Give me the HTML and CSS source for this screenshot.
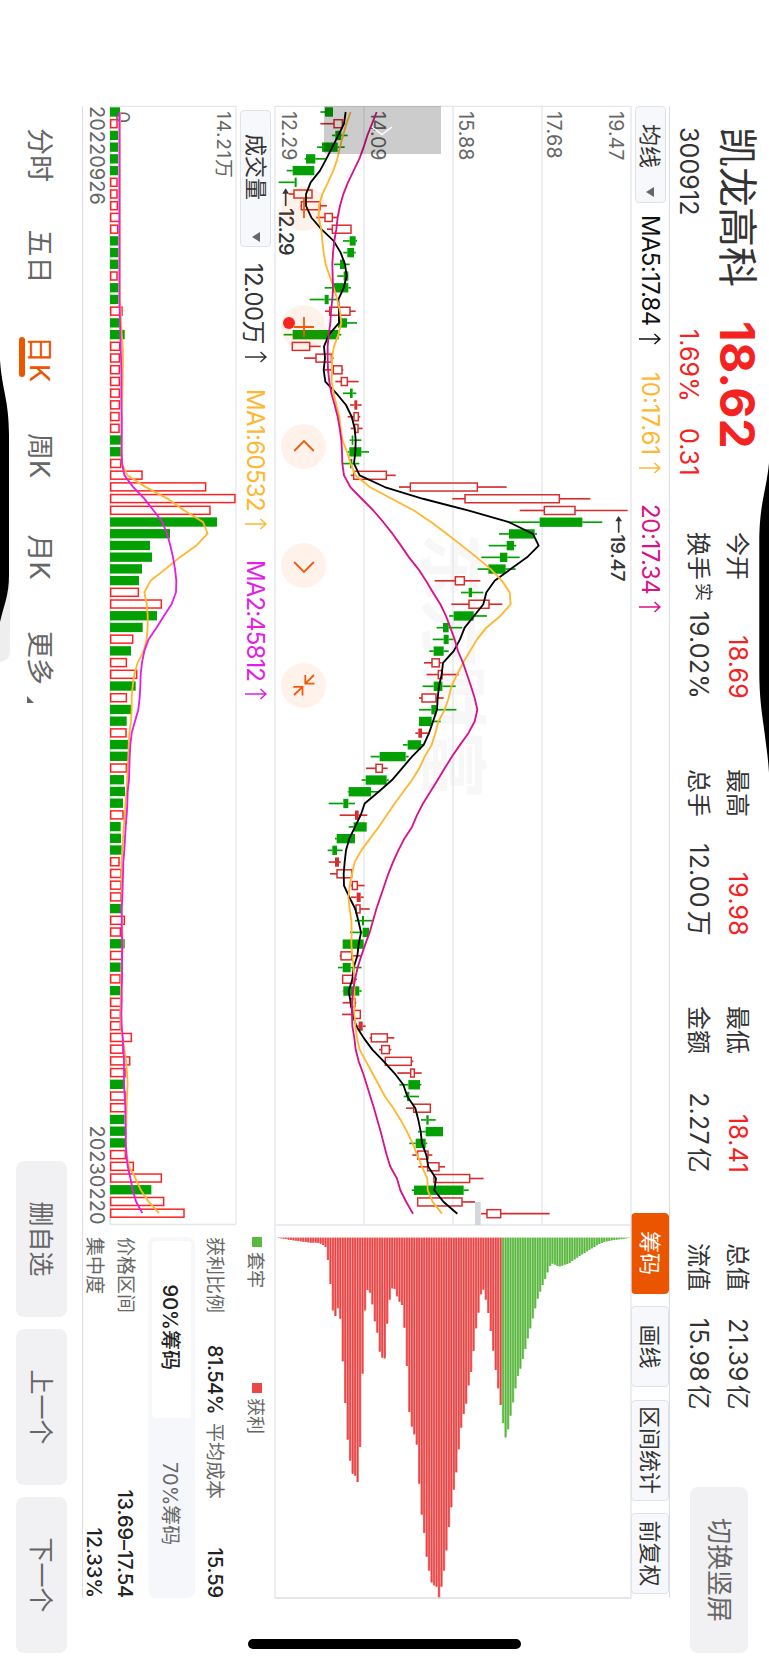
FILE: index.html
```html
<!DOCTYPE html>
<html lang="zh-CN">
	<head>
		<meta charset="UTF-8">
		<title>凯龙高科 300912</title>
		<link rel="stylesheet" href="styles.css">
	</head>
	<body>
		<div class="page">
		<div class="screen">
			<svg class="notch notch-top" viewBox="0 0 310 12"><path d="M0 0C30 3 40 9.700 80 9.700H208C240 9.700 255 6 285 2.500Q297 .8 310 0Z"/></svg>
			<svg class="notch notch-bottom" viewBox="0 0 310 12"><path d="M220 2H292Q300 2 302 12H220Z" fill="#eee"/><path d="M0 12C30 10 40 3 75 3H215C235 3 245 8 262 12Z"/></svg>
			<div class="home-bar"></div>

			<header class="header">
				<div class="stock">
					<div class="stock-top">
						<span class="name">凯龙高科</span>
						<span class="price">18.62</span>
					</div>
					<div class="stock-sub">
						<span class="code">300912</span>
						<span class="percent">1.69%</span>
						<span class="diff">0.31</span>
					</div>
				</div>
				<div class="metrics">
					<div class="metric"><span>今开</span><b class="red">18.69</b></div>
					<div class="metric"><span>最高</span><b class="red">19.98</b></div>
					<div class="metric"><span>最低</span><b class="red">18.41</b></div>
					<div class="metric"><span>总值</span><b>21.39<i>亿</i></b></div>
					<div class="metric"><span class="turnover">换手<sup>实</sup></span><b>19.02%</b></div>
					<div class="metric"><span>总手</span><b>12.00<i>万</i></b></div>
					<div class="metric"><span>金额</span><b>2.27<i>亿</i></b></div>
					<div class="metric"><span>流值</span><b>15.98<i>亿</i></b></div>
				</div>
				<div class="switch-btn">切换竖屏</div>
			</header>

			<div class="toolbar">
				<div class="select">均线<i class="caret"></i></div>
				<span class="ma ma5">MA5:17.84<svg class="up" viewBox="0 0 12 22"><path d="M6 22V1M1 6.5L6 1L11 6.5"/></svg></span>
				<span class="ma ma10">10:17.61<svg class="up" viewBox="0 0 12 22"><path d="M6 22V1M1 6.5L6 1L11 6.5"/></svg></span>
				<span class="ma ma20">20:17.34<svg class="up" viewBox="0 0 12 22"><path d="M6 22V1M1 6.5L6 1L11 6.5"/></svg></span>
				<div class="tools">
					<div class="tool active">筹码</div>
					<div class="tool">画线</div>
					<div class="tool wide">区间统计</div>
					<div class="tool">前复权</div>
				</div>
			</div>

			<div class="charts">
				<div class="kline">
					<svg id="kline" viewBox="0 0 3357 1068"></svg>
					<div class="drawer"><svg viewBox="0 0 12 22"><path d="M2 1L9.500 11L2 21"/></svg></div>
					<div class="controls">
						<div class="ctrl"><svg viewBox="0 0 22 22"><path d="M1 11H21"/></svg></div>
						<div class="ctrl"><svg viewBox="0 0 22 22"><path d="M1 11H21M11 1V21"/></svg><i class="dot"></i></div>
						<div class="ctrl"><svg viewBox="0 0 22 22"><path d="M15 1.200L5 11L15 20.800"/></svg></div>
						<div class="ctrl"><svg viewBox="0 0 22 22"><path d="M7 1.200L17 11L7 20.800"/></svg></div>
						<div class="ctrl"><svg viewBox="0 0 22 22"><path d="M1 9.700H9.700V.5M1 1L9.700 9.700M12.800 21.700V12.500H21.500M21 21L12.800 12.500"/></svg></div>
					</div>
				</div>
				<div class="chips"><svg id="chips" viewBox="0 0 1119 1068"></svg></div>
			</div>

			<div class="lower">
				<div class="volume">
					<div class="toolbar vol-toolbar">
						<div class="select vol-select">成交量<i class="caret"></i></div>
						<span class="ma vol-now">12.00万<svg class="up" viewBox="0 0 12 22"><path d="M6 22V1M1 6.5L6 1L11 6.5"/></svg></span>
						<span class="ma vol-ma1">MA1:60532<svg class="up" viewBox="0 0 12 22"><path d="M6 22V1M1 6.5L6 1L11 6.5"/></svg></span>
						<span class="ma vol-ma2">MA2:45812<svg class="up" viewBox="0 0 12 22"><path d="M6 22V1M1 6.5L6 1L11 6.5"/></svg></span>
					</div>
					<div class="vol-box"><svg id="volume" viewBox="0 0 3357 378"></svg></div>
					<div class="dates"><span>20220926</span><span>20230220</span></div>
				</div>
				<div class="panel">
					<div class="legend">
						<span><i class="sq sq-green"></i>套牢</span>
						<span><i class="sq sq-red"></i>获利</span>
					</div>
					<div class="row profit"><span>获利比例</span><b>81.54%</b><span>平均成本</span><b>15.59</b></div>
					<div class="segment"><div class="seg on">90%筹码</div><div class="seg">70%筹码</div></div>
					<div class="row"><span>价格区间</span><b>13.69–17.54</b></div>
					<div class="row"><span>集中度</span><b>12.33%</b></div>
				</div>
			</div>

			<footer class="footer">
				<nav class="tabs">
					<span>分时</span>
					<span>五日</span>
					<span class="current">日K</span>
					<span>周K</span>
					<span>月K</span>
					<span class="more">更多</span>
				</nav>
				<div class="btn">删自选</div>
				<div class="btn">上一个</div>
				<div class="btn">下一个</div>
			</footer>
		</div>
		</div>
		<script src="chart.js"></script>
	</body>
</html>
```
FILE: styles.css
```css
*{
	box-sizing: border-box;
}
body{
	margin: 0;
	background: #fff;
	font-family: Inter, "Noto Sans CJK SC", sans-serif;
	color: #333;
}
.page{
	width: 769px;
	height: 1665px;
	overflow: hidden;
}
/* 横屏 */
.screen{
	width: 1665px;
	height: 769px;
	position: relative;
	transform-origin: 0 0;
	transform: translateX(769px) rotate(90deg);
	white-space: nowrap;
}
b{
	font-weight: 400;
}
i{
	font-style: normal;
}
.red{
	color: #f52222;
}
.notch{
	position: absolute;
	width: 310px;
	height: 12px;
}
.notch-top{
	left: 463px;
	top: 0;
}
.notch-bottom{
	left: 360px;
	bottom: 0;
}
.home-bar{
	position: absolute;
	left: 1639px;
	top: 248px;
	width: 10px;
	height: 273px;
	border-radius: 5px;
	background: #000;
}

/* 顶部行情 */
.header{
	display: flex;
	height: 98.6px;
	padding-left: 127px;
}
.stock{
	width: 405px;
}
.stock-top{
	display: flex;
	align-items: center;
	height: 63px;
}
.name{
	width: 194px;
	font-size: 40px;
	line-height: 62px;
}
.price{
	font-size: 48px;
	font-weight: 700;
	color: #f52222;
	letter-spacing: 0.2px;
}
.stock-sub{
	display: flex;
	height: 34px;
	line-height: 34px;
	font-size: 25px;
	letter-spacing: 0.1px;
}
.code{
	width: 202px;
}
.percent{
	width: 99px;
	color: #f52222;
}
.diff{
	color: #f52222;
}
.metrics{
	display: grid;
	grid-template-columns: repeat(4, 167px);
	grid-auto-rows: 39px;
	column-gap: 70px;
	padding-top: 12px;
	font-size: 24px;
	line-height: 39px;
}
.metric{
	display: flex;
	justify-content: space-between;
}
.metric b{
	font-size: 25px;
	letter-spacing: 0.2px;
}
.metric b i{
	margin-left: 3px;
}
.turnover sup{
	font-size: 18px;
	line-height: 1;
	margin-left: 3px;
	vertical-align: 7px;
}
.switch-btn{
	width: 166px;
	height: 58px;
	margin: 21px 0 0 77px;
	border-radius: 8px;
	background: #f1f1f4;
	color: #666;
	font-size: 26px;
	line-height: 58px;
	text-align: center;
}

/* 均线工具栏 */
.toolbar{
	display: flex;
	align-items: center;
	width: 1492px;
	height: 39px;
	margin-left: 106px;
	border-top: 1px solid #dcdee3;
}
.select{
	display: flex;
	align-items: center;
	justify-content: space-between;
	width: 97px;
	height: 31px;
	padding: 0 5px 0 17px;
	border: 1px solid #dfe2e7;
	border-radius: 4px;
	background: #f7f8fb;
	font-size: 22px;
	line-height: 28px;
}
.caret{
	border: 5px solid transparent;
	border-top: 8px solid #666;
	border-bottom: 0;
}
.ma{
	display: flex;
	align-items: center;
	font-size: 24px;
	letter-spacing: -0.7px;
}
.up{
	width: 12px;
	height: 22px;
	margin-left: 7px;
	fill: none;
	stroke: currentColor;
	stroke-width: 1.5;
}
.ma5{
	width: 157px;
	margin-left: 12px;
	color: #111;
}
.ma10{
	width: 132px;
	color: #ffb72f;
	letter-spacing: 0;
}
.ma20{
	color: #d8128a;
	letter-spacing: -0.4px;
}
.tools{
	display: flex;
	gap: 12.5px;
	margin-left: auto;
	padding-right: 4px;
}
.tool{
	width: 81px;
	height: 38px;
	border: 1px solid #dfe2e7;
	border-radius: 4px;
	background: #f7f8fb;
	font-size: 22px;
	line-height: 37px;
	text-align: center;
}
.tool.wide{
	width: 101px;
}
.tool.active{
	background: #eb5500;
	border-color: #eb5500;
	color: #fff;
}

/* K线 + 筹码 */
.charts{
	display: flex;
	height: 356px;
	margin-left: 105.5px;
}
.kline{
	position: relative;
	width: 1119px;
}
.chips{
	width: 373px;
}
#kline, #chips, #volume{
	display: block;
	width: 100%;
	height: 100%;
	overflow: visible;
}
.drawer{
	position: absolute;
	left: 0;
	top: 190px;
	width: 48.5px;
	height: 117px;
	border-radius: 0 0 2px 0;
	background: rgba(0,0,0,0.2);
}
.drawer svg{
	display: block;
	width: 12px;
	height: 22px;
	margin: 48px 0 0 19px;
	fill: none;
	stroke: #fff;
	stroke-width: 1.5;
}
.controls{
	position: absolute;
	left: 80px;
	top: 305px;
	display: flex;
	gap: 74.3px;
}
.ctrl{
	position: relative;
	width: 45px;
	height: 45px;
	padding: 11.5px;
	border-radius: 50%;
	background: rgba(236,85,0,0.08);
}
.ctrl svg{
	display: block;
	width: 22px;
	height: 22px;
	fill: none;
	stroke: #f2590c;
	stroke-width: 1.8;
}
.dot{
	position: absolute;
	left: 12px;
	top: 31px;
	width: 12px;
	height: 12px;
	border-radius: 50%;
	background: #f5261f;
}

/* 成交量 */
.lower{
	display: flex;
	width: 1492px;
	height: 193px;
	margin-left: 106px;
	border-bottom: 1px solid #dcdee3;
}
.volume{
	width: 1118.5px;
}
.vol-toolbar{
	width: auto;
	height: 39px;
	margin-left: 0;
	border-top: 0;
}
.vol-select{
	width: 137px;
	margin-left: 4px;
	padding: 0 4px 0 23px;
}
.vol-now{
	width: 126px;
	margin-left: 16px;
}
.vol-ma1{
	width: 171px;
	color: #ffb72f;
}
.vol-ma2{
	color: #e31fe3;
	letter-spacing: -0.9px;
}
.vol-box{
	height: 126px;
}
.dates{
	display: flex;
	justify-content: space-between;
	font-size: 20px;
	line-height: 26px;
	color: #666;
}

/* 筹码统计 */
.panel{
	width: 361px;
	margin-left: 12.5px;
	font-size: 19px;
	color: #666;
}
.legend{
	display: flex;
	height: 40px;
	line-height: 45px;
	font-size: 18px;
}
.legend span{
	display: flex;
	align-items: center;
	width: 146px;
}
.sq{
	width: 10px;
	height: 10px;
	margin: 0 5px 3px 0;
}
.sq-green{
	background: #5bb840;
}
.sq-red{
	background: #ec4646;
}
.row{
	display: flex;
	justify-content: space-between;
	height: 31px;
	line-height: 32px;
}
.row b{
	font-size: 20px;
	font-weight: 500;
	color: #222;
	letter-spacing: -0.1px;
}
.profit{
	height: 40px;
	line-height: 41px;
}
.profit span{
	width: 108px;
}
.profit b:nth-child(2){
	width: 78px;
	letter-spacing: -0.5px;
}
.profit b:nth-child(4){
	flex: 1;
	text-align: right;
}
.segment{
	display: flex;
	height: 47px;
	margin-bottom: 7px;
	padding: 4px;
	border-radius: 8px;
	background: #f6f7fa;
}
.seg{
	flex: 1;
	border-radius: 4px;
	font-size: 20px;
	line-height: 42px;
	text-align: center;
}
.seg.on{
	padding-right: 4px;
	background: #fff;
	font-weight: 500;
	color: #222;
}
.seg:last-child{
	padding-right: 4px;
}

/* 底部 */
.footer{
	display: flex;
	align-items: center;
	gap: 12px;
	height: 81px;
	padding-left: 128px;
}
.tabs{
	display: flex;
	width: 1021px;
	padding-top: 6px;
	font-size: 27px;
	color: #666;
}
.tabs span{
	position: relative;
	width: 101.5px;
	line-height: 56px;
}
.tabs .current{
	width: 97px;
	margin-left: 5px;
	color: #eb5500;
	letter-spacing: 1px;
}
.current::after{
	content: "";
	position: absolute;
	left: 1px;
	bottom: 8px;
	width: 40px;
	height: 6px;
	border-radius: 3px;
	background: #eb5500;
}
.tabs .more{
	width: 74px;
	margin-left: -5px;
}
.more::after{
	content: "";
	position: absolute;
	right: 2px;
	bottom: 16px;
	border-left: 7px solid transparent;
	border-bottom: 7px solid #666;
}
.btn{
	width: 156px;
	height: 51px;
	border-radius: 8px;
	background: #f1f1f4;
	color: #666;
	font-size: 25px;
	line-height: 52px;
	text-align: center;
}
```
FILE: chart.js
```js
var STEP = 35.16;
var FIRST = 18;
var GREEN = '#02a002';

// [low, bodyLow, bodyHigh, high, type]  r:空心 f:红实心 g:绿
var candles = [
	[152,166,190,190,'g'],[152,193,218,218,'r'],[187,197,215,234,'g'],[142,157,204,225,'g'],[105,109,137,170,'g'],
	[51,69,134,134,'g'],[27,75,81,81,'g'],[57,73,127,127,'r'],[93,95,151,172,'r'],[140,166,188,205,'r'],
	[172,188,244,244,'r'],[220,240,258,262,'g'],[221,233,253,258,'g'],[193,211,225,240,'g'],[203,222,236,236,'g'],
	[165,190,236,244,'g'],[120,165,177,205,'g'],[166,180,241,258,'r'],[205,205,232,262,'g'],[42,69,207,215,'g'],
	[67,68,120,153,'r'],[103,139,185,192,'r'],[160,191,217,221,'r'],[197,215,233,267,'r'],[220,241,249,260,'g'],
	[241,254,263,276,'f'],[234,253,266,272,'r'],[243,255,265,279,'r'],[240,246,251,275,'g'],[234,239,275,298,'g'],
	[218,241,248,269,'g'],[243,252,350,378,'r'],[388,422,623,711,'r'],[548,586,869,962,'r'],[750,824,916,1074,'r'],
	[715,810,938,998,'g'],[688,718,795,802,'g'],[657,711,733,740,'g'],[635,691,713,750,'g'],[624,656,708,738,'g'],
	[495,557,584,632,'r'],[574,597,607,641,'g'],[545,598,658,698,'r'],[538,552,612,652,'g'],[501,520,537,578,'g'],
	[489,522,537,552,'g'],[479,492,522,537,'g'],[463,487,509,516,'r'],[471,506,517,567,'r'],[459,492,518,558,'g'],
	[448,457,499,522,'r'],[448,485,500,560,'g'],[448,448,486,513,'g'],[437,446,457,480,'f'],[400,414,454,460,'g'],
	[303,330,408,417,'g'],[289,319,338,354,'r'],[276,288,351,357,'g'],[234,237,304,328,'g'],[177,221,236,256,'g'],
	[210,256,267,293,'f'],[237,252,291,291,'g'],[196,201,256,256,'g'],[174,188,202,219,'g'],[177,196,208,213,'f'],
	[181,202,246,246,'r'],[244,248,263,285,'r'],[244,261,273,282,'f'],[253,259,271,300,'r'],[256,277,283,311,'g'],
	[241,279,298,298,'g'],[219,219,282,282,'g'],[210,214,246,276,'r'],[205,219,243,276,'g'],[217,219,250,262,'r'],
	[219,221,269,276,'g'],[219,243,256,260,'r'],[217,253,272,272,'r'],[262,267,279,288,'f'],[300,305,353,374,'r'],
	[328,336,359,365,'r'],[343,347,425,431,'r'],[383,423,434,456,'r'],[389,416,451,455,'g'],[402,412,419,448,'g'],
	[409,432,482,482,'r'],[454,470,477,498,'g'],[445,468,520,520,'g'],[419,438,468,473,'g'],[428,444,475,488,'r'],
	[446,474,508,526,'r'],[490,493,600,642,'r'],[426,433,582,597,'g'],[444,444,577,616,'r'],[634,652,693,840,'r']
];
var ma5 = [228,223,206,188,170,151,123,109,109,125,155,192,213,226,231,222,206,208,208,178,163,166,162,167,200,229,246,255,258,257,253,270,345,460,595,718,790,807,772,723,675,650,641,613,585,571,552,520,516,508,504,502,490,478,462,427,397,367,327,285,273,256,239,229,225,222,223,239,257,266,274,267,263,252,248,237,243,249,260,282,308,342,374,401,413,437,446,453,457,470,476,499,494,522,563];
var ma10 = [243,230,220,211,203,191,175,158,148,147,155,158,162,168,180,192,203,211,215,206,193,187,187,186,192,200,209,213,218,232,243,257,300,366,433,485,532,577,621,663,697,720,723,692,650,622,601,580,562,545,537,525,506,497,486,465,449,427,401,375,351,327,301,275,255,247,240,236,240,245,246,245,248,252,254,254,254,254,257,262,270,289,308,327,346,371,393,412,429,443,457,473,474,489,517];
var ma20 = [321,307,293,282,269,252,235,221,211,204,200,194,190,188,189,190,188,184,182,177,174,174,175,179,185,195,204,210,215,217,218,223,242,276,311,341,369,394,418,446,469,490,512,529,542,555,565,580,592,604,615,623,615,596,571,547,525,504,482,460,442,427,404,386,370,356,344,332,320,310,300,287,275,264,256,250,247,247,248,254,258,267,280,291,302,313,323,333,342,351,362,382,392,410,430];

var volumes = [30,23,24,24,24,24,23,23,24,32,25,25,25,25,23,25,25,38,29,44,31,30,30,30,30,30,29,29,34,34,34,98,289,377,302,321,180,120,126,96,87,87,156,141,98,70,63,51,82,77,51,64,50,50,55,55,51,42,45,39,41,32,33,35,29,35,35,35,34,45,33,44,38,32,32,30,34,33,33,66,41,61,47,43,47,49,43,48,47,48,72,156,124,163,224];
var volTypes = 'grggggrrrrrgggrggrggrrrrrrrrggrrrrrgggggg' + 'rrggrgrrgrggrggrgggrgggrrrrgrrgrgrgrrrrrrrgrrgggrrrgrr';
var volMa1 = [30,30,30,30,30,30,30,30,30,30,30,30,30,30,30,30,30,32,33,35,38,39,38,38,37,36,35,35,35,34,35,52,106,172,222,279,293,259,210,167,122,103,110,113,113,110,101,83,73,68,65,65,63,58,56,55,53,51,50,46,45,41,39,37,35,34,35,35,35,36,37,38,37,35,34,33,32,31,32,38,43,48,51,53,51,50,49,48,48,50,57,76,92,115,147];
var volMa2 = [28,28,28,28,28,28,28,28,28,28,28,28,28,28,28,28,28,29,30,31,32,33,34,34,34,34,35,35,35,35,36,43,69,103,130,157,171,181,189,195,199,198,185,162,140,116,103,96,92,91,89,85,75,65,61,59,58,57,53,52,50,47,45,43,40,39,38,37,35,35,35,37,36,36,36,35,35,34,35,38,40,42,42,42,44,46,46,47,47,49,53,61,68,78,97];

var chips = [1,2,3,4,6,7,8,9,10,11,12,13,14,15,15,15,16,18,22,28,67,139,218,235,212,243,371,496,606,669,708,714,733,628,408,218,157,165,200,251,285,342,360,362,258,186,152,154,176,192,202,270,385,523,567,590,621,738,831,886,957,999,1034,1043,1047,1082,1047,999,938,868,809,756,704,635,570,529,498,443,403,340,272,225,170,156,186,226,280,339,397,452,502,556,599,575,534,494,452,415,393,364,334,302,272,242,212,183,162,142,124,104,85,78,81,85,86,84,81,79,76,70,65,60,55,50,46,41,36,32,28,23,19,16,13,11,10,8,7,6,5,4,3,2,1];

function rect(x, y, w, h, fill, stroke){
	return '<rect x="' + x + '" y="' + y + '" width="' + w + '" height="' + h + '" fill="' + fill + '"' +
		(stroke ? ' stroke="' + stroke + '" stroke-width="4.5"' : '') + '/>';
}
function line(x1, y1, x2, y2, color, w){
	return '<path d="M' + x1 + ' ' + y1 + 'L' + x2 + ' ' + y2 + '" fill="none" stroke="' + color + '" stroke-width="' + w + '"/>';
}
function text(x, y, str, len, size, color, weight){
	return '<text x="' + x + '" y="' + y + '" font-size="' + size + '" fill="' + color + '" font-weight="' + (weight || 400) +
		'" textLength="' + len + '">' + str + '</text>';
}
function curve(data, base, color){
	var pts = '';
	for(var i = 0;i<data.length;i++){
		pts += (FIRST + i * STEP) + ',' + (base - data[i]) + ' ';
	}
	return '<polyline points="' + pts + '" fill="none" stroke="' + color + '" stroke-width="5.5" stroke-linejoin="round"/>';
}

function drawKline(){
	var base = 1084;
	var s = '<text x="1280" y="608" font-size="204" font-weight="700" fill="#f7f7f7" textLength="800">东方财富</text>';
	for(var g = 0;g<5;g++){
		s += line(0, g * 267, 3357, g * 267, '#e3e6ec', 4);
	}
	s += line(1, 0, 1, 1068, '#e3e6ec', 4) + line(3357, 0, 3357, 1068, '#e3e6ec', 4);
	s += text(16, 65, '19.47', 147, 59, '#666');
	s += text(16, 251, '17.68', 142, 59, '#666');
	s += text(16, 517, '15.88', 147, 59, '#666');
	s += text(16, 779, '14.09', 147, 59, '#666');
	s += text(16, 1047, '12.29', 147, 59, '#666');
	s += rect(3288, 451, 69, 17, '#d3d6dc');
	for(var i = 0;i<candles.length;i++){
		var c = candles[i];
		var x = FIRST + i * STEP;
		var color = c[4] == 'g' ? GREEN : '#d42f2f';
		s += line(x, base - c[0], x, base - c[1], color, 5);
		s += line(x, base - c[2], x, base - c[3], color, 5);
		if(c[4] == 'r'){
			s += rect(x - 12, base - c[2], 24, c[2] - c[1], 'none', color);
		}else{
			s += rect(x - 14, base - c[2], 28, c[2] - c[1], color);
		}
	}
	s += curve(ma5, base, '#000');
	s += curve(ma10, base, '#ffb72f');
	s += curve(ma20, base, '#d8128a');
	// 最高、最低标注
	s += line(262, 1036, 300, 1036, '#333', 5) + '<path d="M247 1036L263 1026V1046Z" fill="#333"/>';
	s += text(306, 1056, '12.29', 143, 60, '#333', 500);
	s += line(1245, 37, 1280, 37, '#333', 5) + '<path d="M1230 37L1246 27V47Z" fill="#333"/>';
	s += text(1285, 60, '19.47', 142, 58, '#333', 500);
	document.getElementById('kline').innerHTML = s;
}

function drawVolume(){
	var s = line(0, 0, 3357, 0, '#e8eaee', 4) + line(0, 378, 3357, 378, '#dcdee3', 4) + line(1, 0, 1, 378, '#e3e6ec', 4) + line(3357, 0, 3357, 378, '#e3e6ec', 4);
	for(var i = 0;i<volumes.length;i++){
		var x = FIRST + i * STEP;
		var v = volumes[i];
		if(volTypes[i] == 'r'){
			s += rect(x - 12, 378 - v + 2, 24, v - 4, '#fff', '#fb2323');
		}else{
			s += rect(x - 14, 378 - v, 28, v, GREEN);
		}
	}
	s += text(16, 57, '14.21万', 200, 57, '#666');
	s += text(16, 360, '0', 32, 57, '#666');
	s += curve(volMa1, 378, '#ffb72f');
	s += curve(volMa2, 378, '#e31fe3');
	document.getElementById('volume').innerHTML = s;
}

function drawChips(){
	var s = '';
	for(var i = 0;i<chips.length;i++){
		var y = 1084 - 27 - i * 7.4;
		s += rect(38, y - 3.8, chips[i], 7.6, i < 91 ? '#f08080' : '#8fd07c');
		s += rect(38, y - 2, chips[i], 4, i < 91 ? '#e94444' : '#58b63e');
	}
	s += line(0, 0, 1119, 0, '#e3e6ec', 4) + line(0, 1068, 1119, 1068, '#e3e6ec', 4) + line(1119, 0, 1119, 1068, '#dcdee3', 4);
	document.getElementById('chips').innerHTML = s;
}

drawKline();
drawVolume();
drawChips();
```
